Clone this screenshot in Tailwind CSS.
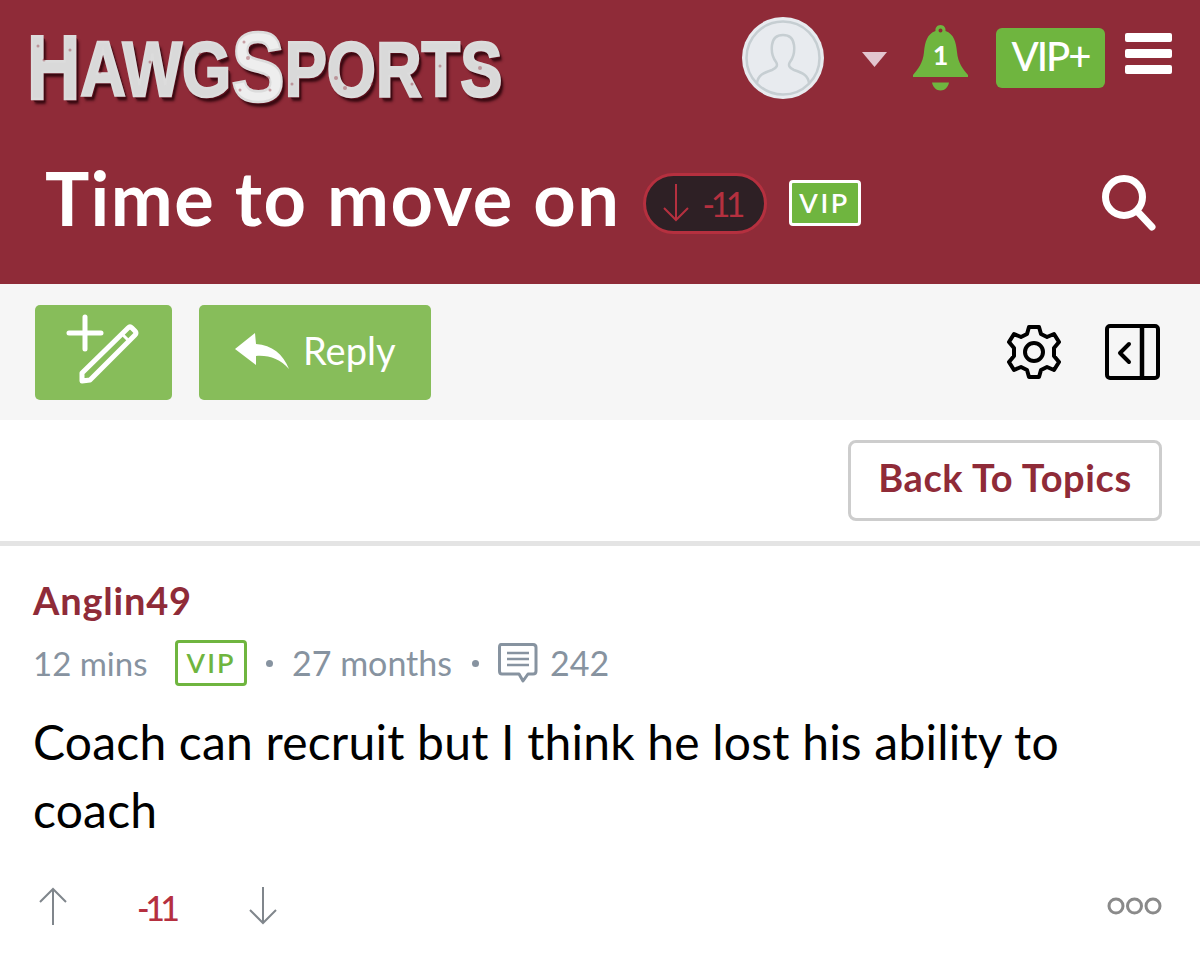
<!DOCTYPE html>
<html lang="en">
<head>
  <meta charset="UTF-8">
  <title>Time to move on</title>
  <script src="https://cdn.jsdelivr.net/npm/@tailwindcss/browser@4"></script>
</head>
<body class="bg-white font-['Lato',sans-serif] overflow-hidden">
  <!-- header -->
  <header class="bg-[#8f2b38] h-[284px] flex flex-col">
    <div class="flex items-start h-[138px] pt-[17px]">
      <div class="relative w-[742px] shrink-0 pl-[27px] pt-[6px]">
        <div class="origin-top-left scale-x-[.82] w-[600px] h-[80px] flex items-end whitespace-nowrap font-['Liberation_Sans',sans-serif] font-bold leading-none blur-[.6px] text-[#d9d9d9] [-webkit-text-stroke:2.5px_#dcdcdc] [text-shadow:2px_2px_0_#5a0f1b,3px_3px_1px_#3a0a12,4px_5px_3px_#3a0a12]">
          <span class="text-[90px] leading-[70px]">H</span><span class="text-[77px] leading-[68px]">AWG</span><span class="text-[98px] leading-[72px] text-[#eeeeee]">S</span><span class="text-[77px] leading-[68px]">PORTS</span>
        </div>
        <!-- worn texture on the logo -->
        <svg class="absolute left-0 top-[-17px] w-[520px] h-[120px] blur-[.5px]" viewBox="0 0 520 120" fill="#8f2b38" fill-opacity=".4">
          <circle cx="38" cy="46" r="1.500"/><circle cx="44" cy="60" r="1.500"/><circle cx="70" cy="50" r="1.500"/><circle cx="100" cy="72" r="1.500"/>
          <circle cx="150" cy="62" r="1.500"/><circle cx="200" cy="54" r="1.500"/><circle cx="208" cy="62" r="2"/><circle cx="244" cy="42" r="1.500"/>
          <circle cx="248" cy="58" r="2"/><circle cx="268" cy="78" r="2"/><circle cx="270" cy="90" r="1.500"/><circle cx="240" cy="90" r="1.500"/><circle cx="292" cy="84" r="1.500"/>
          <circle cx="336" cy="78" r="2"/><circle cx="345" cy="88" r="2"/><circle cx="372" cy="84" r="1.500"/>
          <circle cx="412" cy="84" r="1.500"/><circle cx="440" cy="66" r="1.500"/><circle cx="480" cy="68" r="2"/><circle cx="488" cy="82" r="1.500"/>
        </svg>
      </div>
      <!-- avatar -->
      <svg class="w-[82px] h-[82px] shrink-0" viewBox="0 0 82 82">
        <circle cx="41" cy="41" r="41" fill="#e8ebef"/>
        <circle cx="41" cy="41" r="36.500" fill="none" stroke="#c6ced2" stroke-width="2.500"/>
        <path d="M15 66 C16 58 21 56 30 53 C35 51 36 48 34 45 C31 41 29 36 30 28 C31 20 36 18 41 18 C46 18 51 20 52 28 C53 36 51 41 48 45 C46 48 47 51 52 53 C61 56 66 58 67 66" fill="none" stroke="#c6ced2" stroke-width="2.500" stroke-linejoin="round"/>
      </svg>
      <svg class="w-[25px] h-[15px] ml-[38px] mt-[35px] shrink-0" viewBox="0 0 25 15"><path d="M0 0H25L12.500 15Z" fill="#e3c5cf"/></svg>
      <!-- bell -->
      <div class="relative w-[55px] h-[66px] ml-[26px] mt-[8px] shrink-0">
        <svg class="w-[55px] h-[66px]" viewBox="0 0 55 66">
          <path fill-rule="evenodd" fill="#6fb53f" d="M27.500 0C31 0 33 3 32.500 6C41 9 43 17 44 27C45 38 50 44 55 50V52H0V50C5 44 10 38 11 27C12 17 14 9 22.500 6C22 3 24 0 27.500 0ZM27.500 3.500A2 2 0 1 0 27.500 7.500A2 2 0 1 0 27.500 3.500Z"/>
          <path fill="#6fb53f" d="M19 57.500H36C35 62 32 65.500 27.500 65.500C23 65.500 20 62 19 57.500Z"/>
        </svg>
        <span class="absolute left-0 right-0 top-[14px] text-center text-white text-[27px] font-bold leading-[32px]">1</span>
      </div>
      <div class="w-[109px] h-[60px] ml-[28px] mt-[11px] shrink-0 rounded-[6px] bg-[#6fb53f] text-white text-[40px] font-medium leading-[56px] text-center tracking-[-2px]">VIP+</div>
      <div class="w-[47px] ml-[20px] mt-[16px] shrink-0 flex flex-col gap-[7px]">
        <div class="h-[9px] rounded-[2px] bg-white"></div>
        <div class="h-[9px] rounded-[2px] bg-white"></div>
        <div class="h-[9px] rounded-[2px] bg-white"></div>
      </div>
    </div>
    <div class="flex items-center h-[130px] pl-[45px] pr-[44px]">
      <h1 class="text-white font-bold text-[74px] leading-none tracking-[1.5px] whitespace-nowrap pb-[11px]">Time to move on</h1>
      <div class="ml-[22px] w-[124px] h-[61px] rounded-full bg-[#2e2025] border-[3px] border-[#b5303f] flex items-center pl-[17px] gap-[14px] text-[#b5303f] text-[34px] shrink-0">
        <svg class="w-[26px] h-[38px] shrink-0" viewBox="0 0 26 38" fill="none" stroke="#b5303f" stroke-width="2"><path d="M13 0V36M1 24L13 36L25 24"/></svg>
        <span class="tracking-[-4.500px]">-11</span>
      </div>
      <div class="ml-[22px] w-[72px] h-[46px] rounded-[4px] bg-[#6fb53f] border-[3px] border-white text-white text-[27px] font-semibold leading-[40px] text-center tracking-[2.500px] shrink-0">VIP</div>
      <svg class="ml-auto w-[54px] h-[56px] shrink-0" viewBox="0 0 54 56" fill="none" stroke="#fff" stroke-width="7" stroke-linecap="round"><circle cx="22" cy="22" r="18.500"/><path d="M35 36L50 52"/></svg>
    </div>
  </header>

  <!-- toolbar -->
  <div class="bg-[#f6f6f6] h-[136px] pl-[35px] pr-[40px] flex items-center">
    <button class="w-[137px] h-[95px] rounded-[5px] bg-[#87bd5a] shrink-0">
      <svg class="w-[137px] h-[95px]" viewBox="0 0 137 95" fill="none" stroke="#fff" stroke-width="5" stroke-linejoin="round">
        <path d="M34 28H66M50 12V44" stroke-linecap="round"/>
        <path d="M47 68L93 23Q95 21 97 23L100 26Q102 28 100 30L55 75L47 76Z"/>
        <path d="M87 29L94 36" stroke-width="3"/>
      </svg>
    </button>
    <button class="ml-[27px] w-[232px] h-[95px] rounded-[5px] bg-[#87bd5a] shrink-0 flex items-center pl-[36px] gap-[14px] text-white text-[38px] pb-[3px]">
      <svg class="w-[54px] h-[36px] shrink-0" viewBox="0 0 54 36"><path fill="#fff" d="M0 16L20 0L21 11C37 12 48 21 54 36C45 26 34 22 21 23L21 32Z"/></svg>
      <span>Reply</span>
    </button>
    <svg class="ml-auto w-[56px] h-[56px] shrink-0" viewBox="0 0 56 56" fill="none" stroke="#000" stroke-width="4" stroke-linejoin="round">
      <path d="M23 3H33L35 10L41 13L48 10L53 18L48 24V32L53 38L48 46L41 43L35 46L33 53H23L21 46L15 43L8 46L3 38L8 32V24L3 18L8 10L15 13L21 10Z"/>
      <circle cx="28" cy="28" r="9"/>
    </svg>
    <svg class="ml-[43px] w-[55px] h-[56px] shrink-0" viewBox="0 0 55 56" fill="none" stroke="#000" stroke-width="4" stroke-linejoin="round">
      <rect x="2" y="2" width="51" height="52" rx="3"/>
      <path d="M37 2V54" stroke-width="4.500"/>
      <path d="M24 20L15 29L24 38" stroke-linecap="round"/>
    </svg>
  </div>

  <!-- back row -->
  <div class="h-[126px] border-b-[5px] border-[#e4e4e4] pr-[38px] pt-[20px] flex justify-end items-start">
    <button class="w-[314px] h-[81px] rounded-[8px] border-[3px] border-[#cdcdcd] text-[#8f2b38] font-bold text-[38px] tracking-[.6px] pb-[6px]">Back To Topics</button>
  </div>

  <!-- post -->
  <article class="pl-[33px] pr-[38px] pt-[34px]">
    <div class="text-[#8f2b38] font-bold text-[38px] tracking-[.8px] leading-[40px]">Anglin49</div>
    <div class="mt-[20px] flex items-center text-[#8793a0] text-[33px] leading-[46px] h-[46px]">
      <span class="w-[113px] whitespace-nowrap">12 mins</span>
      <span class="ml-[29px] w-[72px] h-[46px] rounded-[4px] border-[3px] border-[#6fb53f] text-[#6fb53f] text-[27px] font-semibold leading-[40px] text-center tracking-[2px]">VIP</span>
      <span class="ml-[19px] w-[7px] h-[7px] rounded-full bg-[#8793a0]"></span>
      <span class="ml-[19px] text-[34px] w-[161px] whitespace-nowrap">27 months</span>
      <span class="ml-[19px] w-[7px] h-[7px] rounded-full bg-[#8793a0]"></span>
      <svg class="ml-[19px] w-[40px] h-[40px] shrink-0" viewBox="0 0 40 40" fill="none" stroke="#8793a0" stroke-width="3" stroke-linejoin="round">
        <path d="M3 1.500H35Q38 1.500 38 4.500V28Q38 31 35 31H30L25 38L21 31H4Q1.500 31 1.500 28V4.500Q1.500 1.500 3 1.500Z"/>
        <path d="M9 10H31M9 16H31M9 22H31" stroke-width="2.500"/>
      </svg>
      <span class="ml-[12px] text-[34px]">242</span>
    </div>
    <p class="mt-[22px] max-w-[1060px] text-black text-[48px] tracking-[.2px] leading-[68px]">Coach can recruit but I think he lost his ability to coach</p>
    <div class="mt-[42px] flex items-center h-[40px]">
      <svg class="ml-[6px] w-[28px] h-[38px] shrink-0" viewBox="0 0 28 38" fill="none" stroke="#80868c" stroke-width="2"><path d="M14 38V2M1 15L14 2L27 15"/></svg>
      <span class="ml-[70px] w-[39px] pt-[2px] whitespace-nowrap text-[#b5303f] text-[34px] font-medium tracking-[-4.500px]">-11</span>
      <svg class="ml-[73px] w-[28px] h-[38px] shrink-0" viewBox="0 0 28 38" fill="none" stroke="#80868c" stroke-width="2"><path d="M14 0V36M1 23L14 36L27 23"/></svg>
      <svg class="ml-auto w-[55px] h-[18px] shrink-0" viewBox="0 0 55 18" fill="none" stroke="#8a8a8a" stroke-width="3"><circle cx="9" cy="9" r="7"/><circle cx="27.500" cy="9" r="7"/><circle cx="46" cy="9" r="7"/></svg>
    </div>
  </article>
</body>
</html>
